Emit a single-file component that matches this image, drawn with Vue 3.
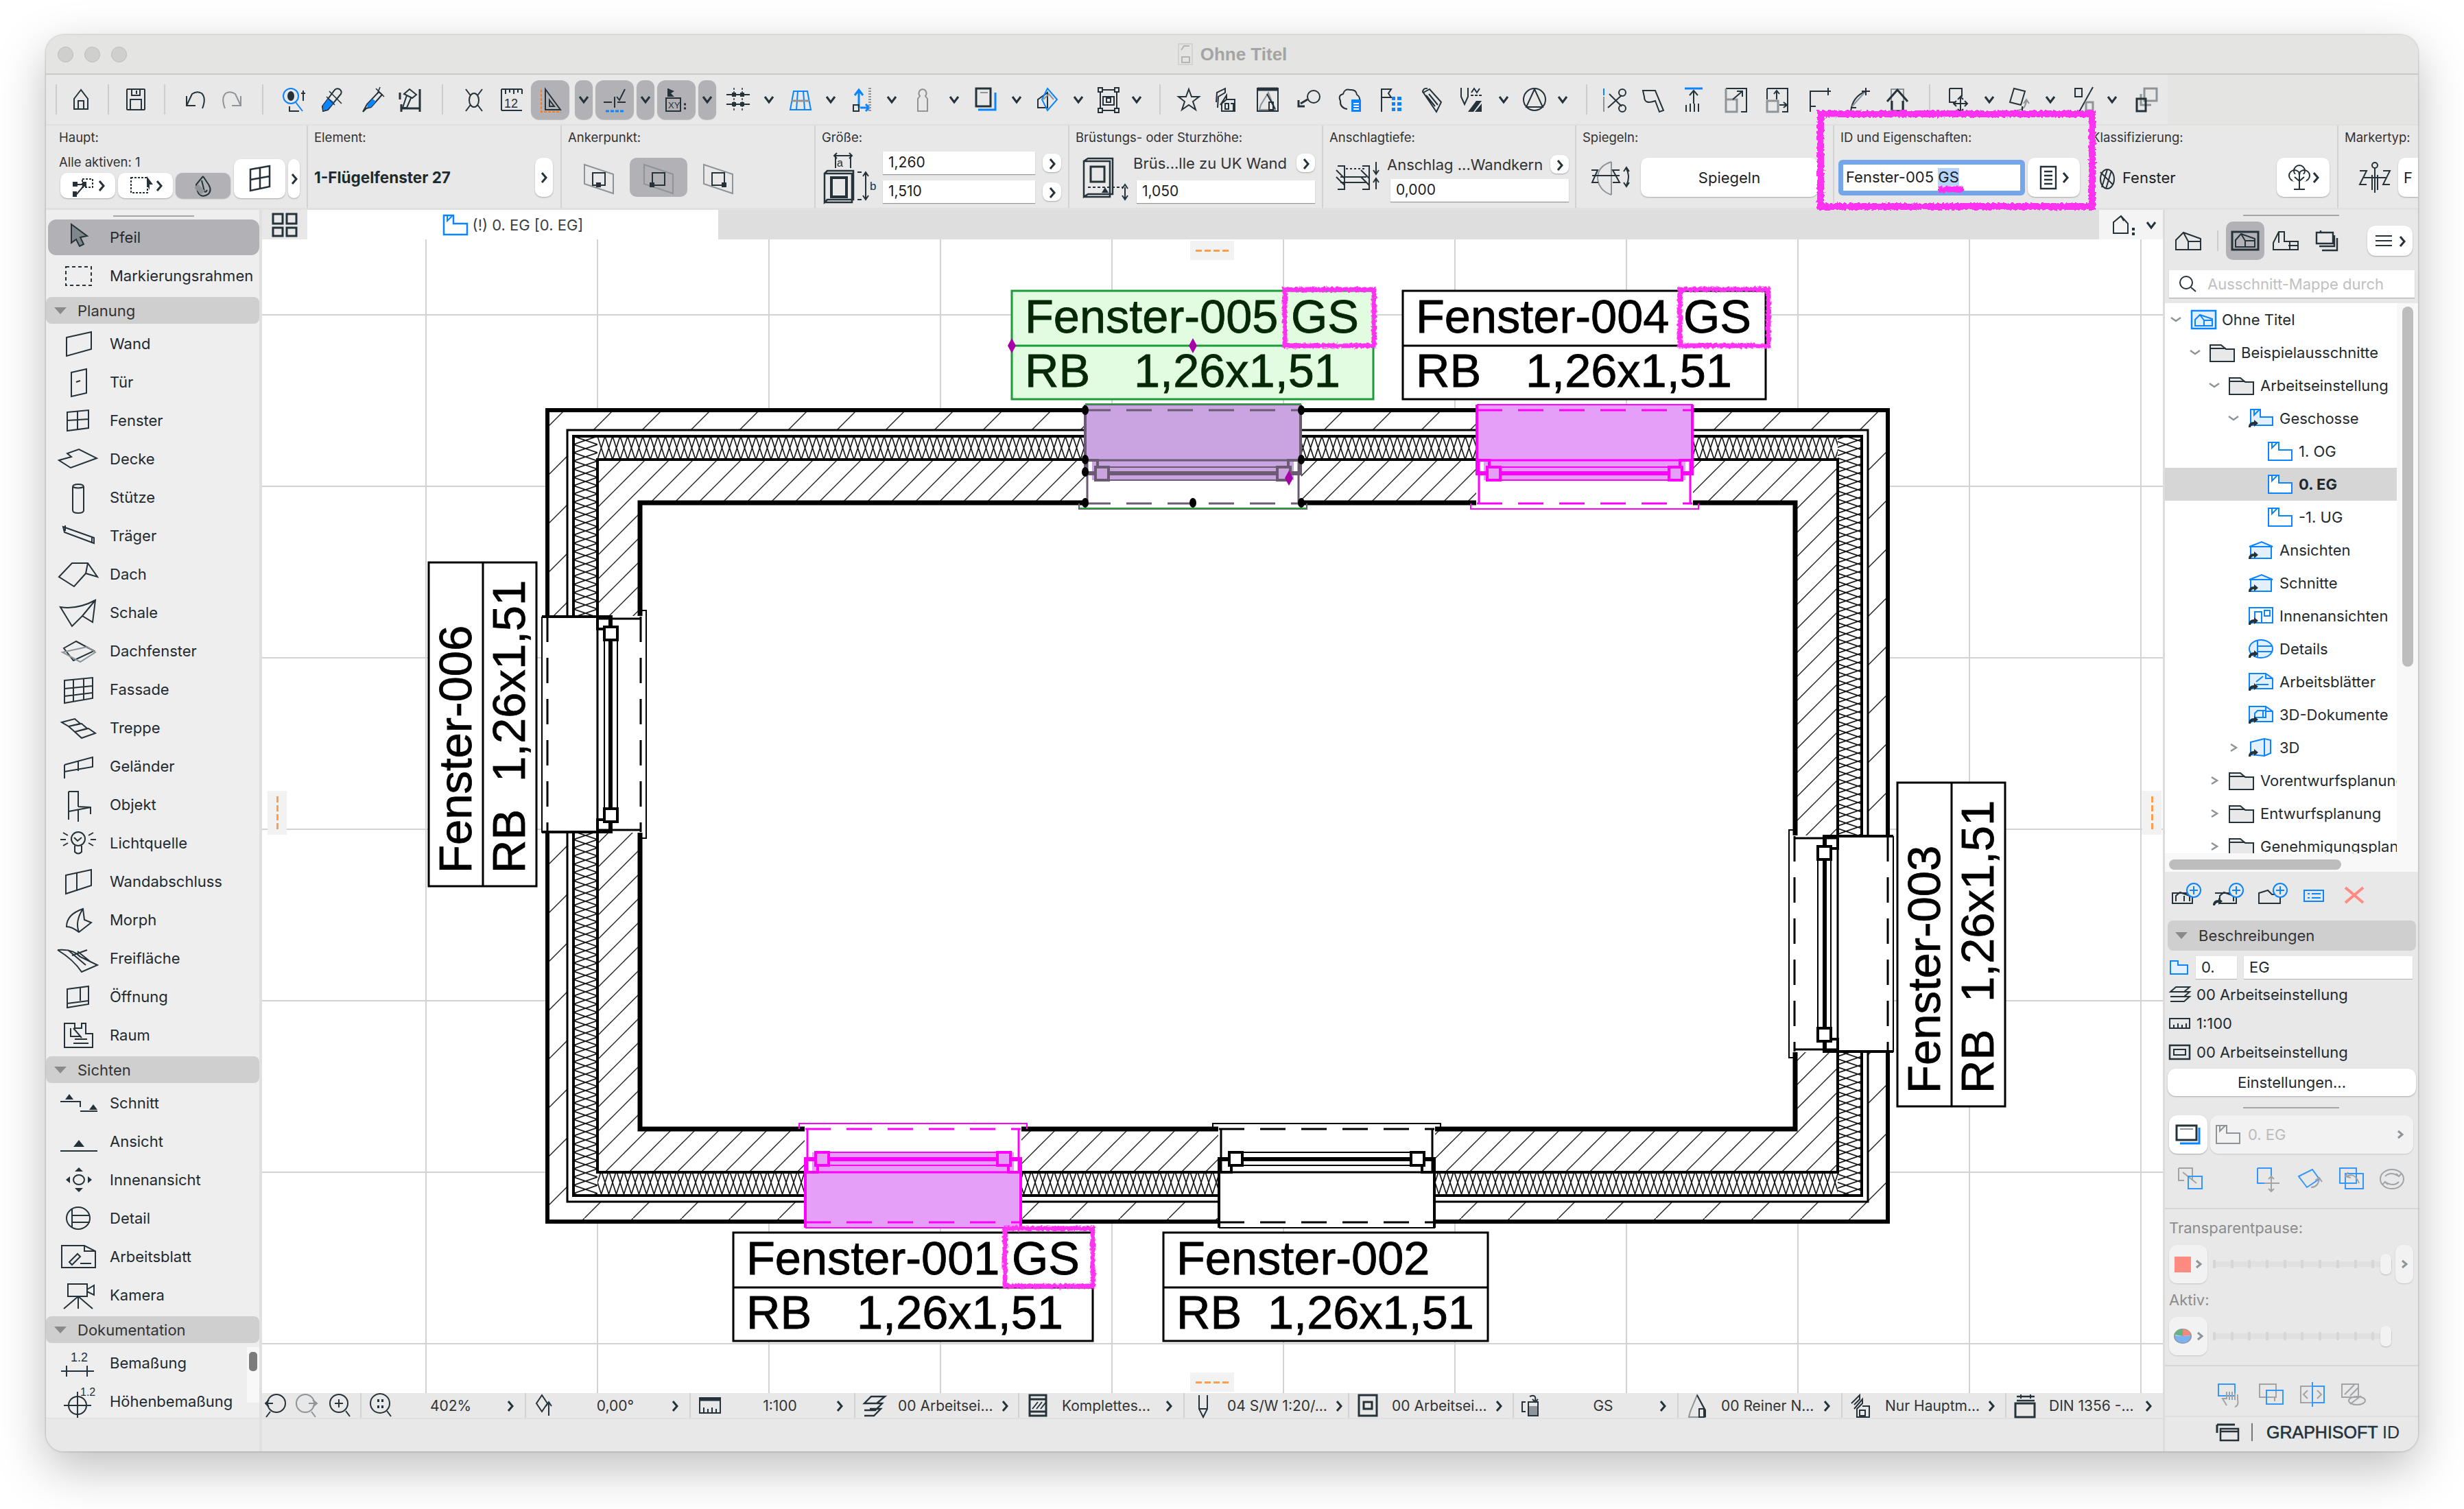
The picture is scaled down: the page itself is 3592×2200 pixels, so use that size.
<template>
  <div class="page">
    <div class="window">
      <!-- title bar -->
      <div class="titlebar">
        <div class="traffic"><i></i><i></i><i></i></div>
        <div class="title"><Ico n="titledoc" :w="24" :h="32" /><span>Ohne Titel</span></div>
        <div></div>
      </div>

      <!-- main toolbar -->
      <div class="toolbar">
        <div class="tb-strip">
          <div v-for="(it, i) in toolCells" :key="i" class="tb-cell" :style="{ width: it.width + 'px' }">
            <span v-if="it.n === 'sep'" class="tb-sep"></span>
            <span v-else-if="it.n === 'chev'" class="tb-chev" :class="{ on: it.on }"><Ico n="down" :w="16" :h="12" /></span>
            <span v-else class="tb-icon" :class="{ on: it.on }"><Ico :n="it.n" /></span>
          </div>
        </div>
      </div>

      <!-- info box -->
      <div class="infobar">
        <div class="sec" style="width: 380px">
          <div class="sec-label lab-main">Haupt:</div>
          <div class="haupt">
            <div class="haupt-col">
              <div class="alle">Alle aktiven: 1</div>
              <div class="haupt-btns">
                <span class="btn hb"><Ico n="marker1" :w="36" :h="32" /><Ico n="right" :w="10" :h="18" /></span>
                <span class="btn hb"><Ico n="marker2" :w="36" :h="32" /><Ico n="right" :w="10" :h="18" /></span>
                <span class="btn hb active"><Ico n="magnet" :w="32" :h="32" /></span>
              </div>
            </div>
            <span class="btn winbtn"><Ico n="window" :w="34" :h="40" /></span>
            <span class="btn tinybtn"><Ico n="right" :w="10" :h="18" /></span>
          </div>
        </div>

        <div class="sec" style="width: 370px">
          <div class="sec-label">Element:</div>
          <div class="sec-body">
            <span class="bold">1-Flügelfenster 27</span>
            <span class="grow"></span>
            <span class="btn chevbtn"><Ico n="right" :w="10" :h="18" /></span>
          </div>
        </div>

        <div class="sec" style="width: 370px">
          <div class="sec-label">Ankerpunkt:</div>
          <div class="sec-body anchors">
            <span class="anchor"><Ico n="anchorA" :w="46" :h="46" /></span>
            <span class="anchor active"><Ico n="anchorB" :w="46" :h="46" /></span>
            <span class="anchor"><Ico n="anchorC" :w="46" :h="46" /></span>
          </div>
        </div>

        <div class="sec" style="width: 370px">
          <div class="sec-label">Größe:</div>
          <div class="sec-body size">
            <Ico n="sizeab" :w="78" :h="76" />
            <div class="two">
              <div class="inrow"><span class="input w222">1,260</span><span class="btn smallbtn"><Ico n="right" :w="10" :h="16" /></span></div>
              <div class="inrow"><span class="input w222">1,510</span><span class="btn smallbtn"><Ico n="right" :w="10" :h="16" /></span></div>
            </div>
          </div>
        </div>

        <div class="sec" style="width: 370px">
          <div class="sec-label">Brüstungs- oder Sturzhöhe:</div>
          <div class="sec-body parapet">
            <Ico n="parapet" :w="70" :h="60" />
            <div class="two">
              <div class="txtrow"><span>Brüs...lle zu UK Wand</span><span class="btn smallbtn"><Ico n="right" :w="10" :h="16" /></span></div>
              <span class="input w260">1,050</span>
            </div>
          </div>
        </div>

        <div class="sec" style="width: 369px">
          <div class="sec-label">Anschlagtiefe:</div>
          <div class="sec-body parapet">
            <Ico n="rebate" :w="70" :h="46" />
            <div class="two tight">
              <div class="txtrow"><span>Anschlag ...Wandkern</span><span class="btn smallbtn"><Ico n="right" :w="10" :h="16" /></span></div>
              <span class="input w260">0,000</span>
            </div>
          </div>
        </div>

        <div class="sec" style="width: 376px">
          <div class="sec-label">Spiegeln:</div>
          <div class="sec-body mirror">
            <Ico n="mirror" :w="70" :h="54" />
            <span class="btn mirrorbtn">Spiegeln</span>
          </div>
        </div>

        <div class="sec" style="width: 373px">
          <div class="sec-label">ID und Eigenschaften:</div>
          <div class="sec-body idbody">
            <span class="idfield">Fenster-005 <mark>GS</mark></span>
            <span class="btn idbtn"><Ico n="doclist" :w="26" :h="34" /><Ico n="right" :w="10" :h="18" /></span>
          </div>
        </div>

        <div class="sec" style="width: 362px">
          <div class="sec-label lab-class">Klassifizierung:</div>
          <div class="sec-body classbody">
            <Ico n="ball" :w="24" :h="36" />
            <span>Fenster</span>
            <span class="grow"></span>
            <span class="btn treebtn"><Ico n="tree" :w="34" :h="38" /><Ico n="right" :w="10" :h="18" /></span>
          </div>
        </div>

        <div class="sec last" style="width: 118px">
          <div class="sec-label">Markertyp:</div>
          <div class="sec-body markbody">
            <Ico n="marker" :w="54" :h="48" />
            <span class="btn markbtn">F</span>
          </div>
        </div>
      </div>

      <div class="main">
        <!-- toolbox -->
        <aside class="lpanel">
          <div class="l-list">
            <div class="handle"></div>
            <div class="l-row pfeil"><span class="l-ico"><Ico n="arrow" :w="56" :h="36" /></span>Pfeil</div>
            <div class="l-row"><span class="l-ico"><Ico n="marquee" :w="56" :h="36" /></span>Markierungsrahmen</div>
            <template v-for="g in toolGroups" :key="g.title">
              <div class="l-head"><i class="tri"></i>{{ g.title }}</div>
              <div v-for="t in g.items" :key="t[0]" class="l-row"><span class="l-ico"><Ico :n="t[1]" :w="56" :h="36" /></span>{{ t[0] }}</div>
            </template>
            <div class="l-scroll"><i></i></div>
          </div>
          <div class="l-foot"></div>
        </aside>

        <!-- middle column -->
        <section class="center">
          <div class="tabbar">
            <span class="tab-grid"><Ico n="tabgrid" :w="40" :h="36" /></span>
            <div class="tab"><Ico n="floor" :w="38" :h="30" /><span>(!) 0. EG [0. EG]</span></div>
            <span class="grow"></span>
            <div class="tab-right"><Ico n="viewpt" :w="44" :h="32" /><Ico n="down" :w="16" :h="12" /></div>
          </div>

          <div class="canvas">
            <svg class="drawing" viewBox="382 348 2771 1682" width="2771" height="1682">
              <defs>
                <pattern id="hatchFine" width="35" height="35" patternUnits="userSpaceOnUse">
                  <path d="M36 -1 L-1 36 M-5 5 L5 -5 M30 40 L40 30" stroke="#222" stroke-width="1.4" />
                </pattern>
                <pattern id="hatchWide" width="71" height="71" patternUnits="userSpaceOnUse">
                  <path d="M72 -1 L-1 72" stroke="#222" stroke-width="1.4" />
                </pattern>
                <pattern id="insH" x="871" y="635" width="11" height="34" patternUnits="userSpaceOnUse">
                  <path d="M0 0 L11 34 M11 0 L0 34" stroke="#1a1a1a" stroke-width="1.7" />
                </pattern>
                <pattern id="insV" x="836" y="635" width="35" height="12" patternUnits="userSpaceOnUse">
                  <path d="M0 0 L35 12 M0 12 L35 0" stroke="#1a1a1a" stroke-width="1.7" />
                </pattern>
              </defs>

              <!-- grid -->
              <path v-for="x in gridX" :key="'x' + x" :d="`M${x} 348 V2030`" stroke="#d2d2d2" stroke-width="2" />
              <path v-for="y in gridY" :key="'y' + y" :d="`M382 ${y} H3153`" stroke="#d2d2d2" stroke-width="2" />

              <!-- wall -->
              <path :d="ring(0, 29)" fill="#fff" />
              <path :d="ring(0, 29)" fill="url(#hatchWide)" fill-rule="evenodd" />
              <path :d="ring(29, 38)" fill="#fff" fill-rule="evenodd" />
              <path :d="ring(38, 73)" fill="#fff" fill-rule="evenodd" />
              <rect x="871" y="635" width="1808" height="34" fill="url(#insH)" />
              <rect x="871" y="1708" width="1808" height="34" fill="url(#insH)" />
              <rect x="836" y="635" width="35" height="1107" fill="url(#insV)" />
              <rect x="2679" y="635" width="35" height="1107" fill="url(#insV)" />
              <path :d="ring(73, 135)" fill="#fff" fill-rule="evenodd" />
              <path :d="ring(73, 135)" fill="url(#hatchFine)" fill-rule="evenodd" />
              <rect x="798" y="597" width="1954" height="1183" fill="none" stroke="#000" stroke-width="6" />
              <rect x="827" y="626" width="1896" height="1125" fill="none" stroke="#000" stroke-width="3" />
              <rect x="836" y="635" width="1878" height="1107" fill="none" stroke="#000" stroke-width="4" />
              <rect x="871" y="669" width="1808" height="1039" fill="none" stroke="#000" stroke-width="4" />
              <rect x="933" y="732" width="1684" height="913" fill="#fff" stroke="#000" stroke-width="7" />

              <!-- windows -->
              <g v-for="w in windows" :key="w.id" :transform="w.t" :stroke="w.stroke" fill="none">
                <rect x="-1" y="-9" width="316" height="154" fill="#fff" stroke="none" />
                <rect x="0" y="-8" width="314" height="81" :fill="w.fill" stroke="none" />
                <rect x="10" y="73" width="294" height="29" :fill="w.fill" stroke="none" />
                <path d="M0 -8 H314 V0 M0 -8 V0" stroke-width="2" />
                <path d="M0 -8 V73 M314 -8 V73" stroke-width="4" />
                <path d="M0 73 H314" stroke-width="3" />
                <path d="M0 0 H314 M0 136 H314" stroke-width="3" stroke-dasharray="37 23" />
                <path d="M3 73 V136 M311 73 V136" stroke-width="3" />
                <path d="M0 73 H18 V93 H0 Z M296 73 H314 V93 H296 Z" stroke-width="4" />
                <path d="M34 83 H280 V102 H34 Z" stroke-width="2" />
                <path d="M34 92 H280 M2 92 H15 M299 92 H312" stroke-width="6" />
                <rect x="15" y="83" width="19" height="19" stroke-width="4" :fill="w.fill === 'none' ? '#fff' : w.fill" />
                <rect x="280" y="83" width="19" height="19" stroke-width="4" :fill="w.fill === 'none' ? '#fff' : w.fill" />
                <path d="M-9 136 V144 H323 V136" stroke-width="2" />
              </g>

              <!-- selected window outline -->
              <path d="M1582 588 H1897 M1574 740 H1905" stroke="#2f9e44" stroke-width="2" fill="none" />
              <ellipse v-for="(d, i) in handles" :key="'h' + i" :cx="d[0]" :cy="d[1]" rx="5" ry="7" fill="#000" />

              <!-- markers: horizontal labels -->
              <g v-for="l in labels" :key="l.id" class="lbl">
                <rect :x="l.x" :y="l.y" :width="l.w" height="158" :fill="l.sel ? '#e1fce1' : '#fff'" :stroke="l.sel ? '#1f9a3a' : '#000'" stroke-width="3" />
                <path :d="`M${l.x} ${l.y + 80} h${l.w}`" :stroke="l.sel ? '#1f9a3a' : '#000'" stroke-width="3" />
                <g :fill="l.sel ? '#062806' : '#000'" :stroke="l.sel ? '#062806' : '#000'" stroke-width=".8">
                  <text :x="l.x + 19" :y="l.y + 61">{{ l.id }}</text>
                  <text v-if="l.gs" :x="l.gs" :y="l.y + 61">GS</text>
                  <text :x="l.x + 19" :y="l.y + 140">RB</text>
                  <text :x="l.nx" :y="l.y + 140">1,26x1,51</text>
                </g>
              </g>

              <!-- markers: rotated labels -->
              <g v-for="l in sideLabels" :key="l.id" class="lbl side">
                <rect :x="l.x" :y="l.y" width="157" height="472" fill="#fff" stroke="#000" stroke-width="3" />
                <path :d="`M${l.x + 79} ${l.y} v472`" stroke="#000" stroke-width="3" />
                <text :transform="`translate(${l.x + 62} ${l.y + 453}) rotate(-90)`">{{ l.id }}</text>
                <text :transform="`translate(${l.x + 140} ${l.y + 453}) rotate(-90)`">RB</text>
                <text :transform="`translate(${l.x + 140} ${l.y + 320}) rotate(-90)`">1,26x1,51</text>
              </g>

              <path v-for="(d, i) in diamonds" :key="'d' + i" :d="`M${d[0]} ${d[1] - 11} l6 11 l-6 11 l-6 -11 Z`" fill="#a800a8" />
            </svg>

            <i class="edge e-top"></i>
            <i class="edge e-bottom"></i>
            <i class="edge e-left"></i>
            <i class="edge e-right"></i>
          </div>

          <div class="statusbar">
            <div class="st-zoom">
              <Ico n="zoomback" :w="36" :h="34" />
              <Ico n="zoomfwd" :w="36" :h="34" />
              <Ico n="zoomin" :w="36" :h="34" />
            </div>
            <div v-for="s in statusItems" :key="s.key" class="st-sec" :style="{ width: s.w + 'px' }">
              <span class="st-ico"><Ico :n="s.ico" :w="36" :h="34" /></span>
              <span class="st-txt" :class="{ mid: s.mid }">{{ s.t }}</span>
              <span class="st-chev"><Ico n="right" :w="10" :h="16" /></span>
            </div>
          </div>
          <div class="c-foot"></div>
        </section>

        <!-- navigator -->
        <aside class="rpanel">
          <div class="handle wide"></div>
          <div class="r-tabs">
            <Ico n="house3d" :w="40" :h="30" />
            <i class="vline"></i>
            <span class="r-on"><Ico n="projmap" :w="40" :h="30" /></span>
            <Ico n="viewmap" :w="40" :h="30" />
            <Ico class="pub" n="publish" :w="36" :h="32" />
            <span class="btn r-menu"><Ico n="menu" :w="28" :h="20" /><Ico n="right" :w="10" :h="16" /></span>
          </div>
          <div class="r-search"><Ico n="search" :w="26" :h="26" /><span>Ausschnitt-Mappe durch</span></div>
          <div class="r-tree-wrap">
            <div class="r-tree">
              <div
                v-for="r in treeRows"
                :key="r.t"
                class="t-row"
                :class="{ sel: r.sel }"
                :style="{ paddingLeft: 8 + r.l * 28 + 'px' }"
              >
                <span class="t-chev"><Ico v-if="r.c" :n="r.c === 'd' ? 'tdown' : 'tright'" :w="16" :h="14" /></span>
                <Ico :n="r.i" :w="38" :h="28" />
                <span class="t-text">{{ r.t }}</span>
              </div>
            </div>
            <div class="r-vbar"><i></i></div>
          </div>
          <div class="r-hbar"><i></i></div>
          <div class="r-actions">
            <Ico n="addview" :w="44" :h="40" />
            <Ico n="addlink" :w="44" :h="40" />
            <Ico n="addfolder" :w="44" :h="40" />
            <Ico n="listblue" :w="32" :h="40" />
            <Ico n="redx" :w="32" :h="40" />
          </div>
          <div class="l-head r-head"><i class="tri"></i>Beschreibungen</div>
          <div class="r-fields">
            <Ico n="floorsmall" :w="28" :h="24" />
            <span class="r-in a">0.</span>
            <span class="r-in b">EG</span>
          </div>
          <div class="r-line first"><Ico n="stack" :w="32" :h="26" />00 Arbeitseinstellung</div>
          <div class="r-line"><Ico n="scale" :w="32" :h="26" />1:100</div>
          <div class="r-line"><Ico n="penset" :w="32" :h="26" />00 Arbeitseinstellung</div>
          <div class="btn r-settings">Einstellungen...</div>
          <div class="handle wide second"></div>
          <div class="r-trace">
            <span class="btn r-square"><Ico n="traceon" :w="38" :h="32" /></span>
            <span class="r-disabled"><Ico n="floorgray" :w="38" :h="28" /><span>0. EG</span><span class="grow"></span><Ico n="rightgray" :w="10" :h="16" /></span>
          </div>
          <div class="r-dim">
            <Ico n="t1" :w="38" :h="34" />
            <span class="grow"></span>
            <Ico n="t2" :w="38" :h="34" />
            <Ico n="t3" :w="38" :h="34" />
            <Ico n="t4" :w="38" :h="34" />
            <Ico n="t5" :w="38" :h="34" />
          </div>
          <div class="r-sep"></div>
          <div class="r-cap">Transparentpause:</div>
          <div class="r-slider">
            <span class="r-square dim"><i class="swatch"></i><Ico n="rightgray" :w="10" :h="16" /></span>
            <span class="track"><i v-for="n in 11" :key="n"></i><b></b></span>
            <span class="r-mini dim"><Ico n="rightgray" :w="10" :h="16" /></span>
          </div>
          <div class="r-cap cap2">Aktiv:</div>
          <div class="r-slider">
            <span class="r-square dim"><Ico n="pie" :w="28" :h="24" /><Ico n="rightgray" :w="10" :h="16" /></span>
            <span class="track"><i v-for="n in 11" :key="n"></i><b></b></span>
          </div>
          <div class="r-sep s2"></div>
          <div class="r-dim center-row">
            <Ico n="t6" :w="38" :h="34" />
            <Ico n="t7" :w="38" :h="34" />
            <Ico n="t8" :w="38" :h="34" />
            <Ico n="t9" :w="38" :h="34" />
          </div>
          <div class="r-foot">
            <Ico n="winset" :w="34" :h="26" />
            <i class="vbar"></i>
            <span class="gs-id"><b>GRAPHISOFT</b> ID</span>
          </div>
        </aside>
      </div>
    </div>

    <!-- hand-drawn marks laid over the screenshot -->
    <svg class="marks" viewBox="0 0 3592 2200" width="3592" height="2200">
      <defs>
        <filter id="scribble" x="-5%" y="-5%" width="110%" height="110%">
          <feTurbulence type="fractalNoise" baseFrequency="0.25" numOctaves="2" seed="4" result="noise" />
          <feDisplacementMap in="SourceGraphic" in2="noise" scale="6" />
        </filter>
      </defs>
      <g fill="none" stroke="#ff30f2" filter="url(#scribble)">
        <rect x="2654" y="166" width="396" height="135" stroke-width="10" />
        <rect x="1873" y="422" width="130" height="82" stroke-width="7" />
        <rect x="2449" y="422" width="129" height="82" stroke-width="7" />
        <rect x="1465" y="1791" width="128" height="84" stroke-width="7" />
        <path d="M2826 276 H2862" stroke-width="9" />
      </g>
    </svg>
  </div>
</template>

<script setup>
import { h } from 'vue'

const B = '#0a84ff'
const G = '#8f9498'
const O = '#ff7a1a'
const blue = `stroke="${B}"`
const gray = `stroke="${G}"`
const P = (d, a = '') => `<path d="${d}" ${a}/>`
const solid = (c) => `fill="${c}" stroke="none"`
const T = (x, y, s, t) => `<text x="${x}" y="${y}" font-size="${s}" font-family="Liberation Sans, sans-serif" fill="#25323a" stroke="none">${t}</text>`
const link = P('M1 27 q0 -8 8 -8 v-3 l6 5 -6 5 v-3 q-4 0 -5 4 Z', solid('#25323a'))
const lightB = '#e2f0ff'

const icons = {
  titledoc: P('M2 1 H22 V31 H2 Z', 'stroke="#d2d2d2"') + P('M6 10 L10 4 H18 M7 20 H18 V28 H7 Z', 'stroke="#b4b4b4"'),
  // toolbar
  home: P('M18 4 L8 17 V32 H28 V17 Z M14 32 V20 H22 V32'),
  save: P('M6 3 H30 Q31 3 31 4 V32 Q31 33 30 33 H6 Q5 33 5 32 V4 Q5 3 6 3 Z M12 3 V12 H24 V3 M19 5 V10 M10 33 V18 H26 V33'),
  undo: P('M4 13 V27 H17 M4 27 L12 10 Q19 5 26 9 Q33 16 27 31'),
  redo: P('M32 13 V27 H19 M32 27 L24 10 Q17 5 10 9 Q3 16 9 31', gray),
  find: `<circle cx="13" cy="13" r="11" ${blue}/><ellipse cx="13" cy="13" rx="5" ry="7" ${solid('#25323a')}/>` + P('M20 22 L30 35', blue) + P('M31 5 V20 M28 9 H34 M11 28 V35 H25') ,
  pipette: P('M5 35 L4 28 L22 4 Q25 1 29 3 Q33 6 31 10 L12 33 Z') + P('M5 34 L5 27 L13 16 L21 22 L12 32 Z', solid(B)) + P('M14 6 L32 24 M10 14 L22 26', 'stroke-width="1.6"'),
  inject: P('M3 36 L9 25 L26 7 L31 11 L15 29 L8 31 Z') + P('M9 30 L10 25 L17 17 L22 21 L15 29 Z', solid(B)) + P('M22 2 L34 14 M28 0 L24 10', 'stroke-width="1.6"'),
  hammer: P('M8 10 L16 3 L26 11 L20 16 Z M12 12 L6 30 L12 30 L18 16') + P('M31 3 V30 M4 31 H31 M4 25 V36 M31 25 V36 M2 8 V18', 'stroke-width="3"'),
  xmark: P('M6 3 L30 35 M30 3 L6 35') + `<ellipse cx="18" cy="19" rx="7" ry="10" fill="#e8e8e8"/>`,
  ruler: P('M3 3 H33 M3 34 H33 M3 3 V34 M9 3 V10 M15 3 V8 M21 3 V10 M27 3 V8 M33 3 V10') + T(7, 30, 18, '12'),
  tri: P('M11 3 L33 33 H11 Z M17 19 L24 28 H17 Z') + P('M5 4 V36 H34', `stroke="${O}" stroke-dasharray="4 2"`),
  snap: P('M2 22 H14 M22 22 H34 M18 14 V30') + P('M21 14 L25 19 L33 3') + P('M5 35 H33', `${blue} stroke-width="3" stroke-dasharray="5 2"`),
  xy: P('M6 2 V14') + P('M6 2 L15 6 L10 9 L15 14 H6 Z', solid('#25323a')) + P('M3 16 H24 V35 H3 Z') + T(6, 31, 13, 'XY') + P('M29 25 h3 M29 31 h3', 'stroke-width="3"'),
  gridsnap: P('M12 1 V35 M24 1 V35', 'stroke-dasharray="3 2" stroke-width="1.5"') + P('M1 11 H35 M1 25 H35', 'stroke-width="2"') + P('M9 8h6v6h-6z M21 8h6v6h-6z M9 22h6v6h-6z M21 22h6v6h-6z', solid('#25323a')),
  plane: P('M8 6 H28 L33 33 H3 Z M14 6 L12 33 M22 6 L24 33', blue) + P('M5 20 H31', 'stroke="#8f9498" stroke-width="3"'),
  gravity: P('M14 30 V6 M8 12 L14 4 L20 12 M16 30 H28 M24 25 L29 30 L24 35', `${blue} stroke-width="3"`) + P('M30 1 V36', 'stroke="#8f9498" stroke-width="4" stroke-dasharray="2 2"') + P('M6 26 H14 V35 H6 Z'),
  weight: P('M18 3 A6 6 0 0 1 22 13 L25 17 V35 H11 V17 L14 13 A6 6 0 0 1 18 3 Z', gray),
  layers: P('M5 2 H26 V28 H5 Z', 'stroke-width="3"') + P('M11 8 H22', gray) + P('M8 33 H33 V8', `${blue} stroke-width="3"`),
  diamond: P('M4 18 L18 8 V30 H4 Z') + P('M18 2 L32 18 L18 34 L10 18 Z', blue) + P('M12 18 L20 10 L27 18', gray),
  frame: P('M5 4 H29 M5 34 H29 M5 4 V34 M29 4 V34', 'stroke-width="2"') + P('M9 14 H25 V26 H9 Z') + P('M2 1h6v6h-6z M26 1h6v6h-6z M2 31h6v6h-6z M26 31h6v6h-6z M14 16h6v6h-6z', 'fill="#e8e8e8"'),
  star: P('M18 3 L22 14 H33 L24 21 L28 33 L18 26 L8 33 L12 21 L3 14 H14 Z'),
  house: P('M3 22 L4 8 L16 2 V8 L6 14 L5 30 M9 26 L18 12 V18 L11 24 V35 H30 V18 H18') + P('M16 24 H21 V32 H16 Z M24 24 H28 V35'),
  drawing: P('M3 2 H33 V35 H3 Z') + P('M3 3 H33', 'stroke-width="5"') + P('M19 8 L29 33 H6 L8 26 Z', gray) + P('M17 10 L29 32 M20 22 H26 V33 H20 Z'),
  keyback: `<circle cx="25" cy="14" r="9"/>` + P('M16 18 L6 24 M3 19 V28 H12', 'stroke-width="3"'),
  clouddoc: P('M14 32 Q3 30 4 20 Q0 12 8 10 Q10 2 18 4 Q27 3 28 11 Q33 14 32 20') + P('M20 18 H34 V36 H20 Z', `fill="${B}" stroke="none"`) + P('M23 24 H31 M23 28 H31 M23 32 H31', 'stroke="#fff"'),
  flaglist: P('M4 36 V3 H18 L14 9 L18 15 H4') + P('M19 14h5v5h-5z M27 14h6v5h-6z M19 22h5v5h-5z M27 22h6v5h-6z M19 30h5v5h-5z M27 30h6v5h-6z', solid(B)),
  tag: P('M5 8 L14 3 L31 22 L24 36 Z M9 12 L22 28 M13 10 L26 26') + P('M4 8 Q4 1 11 2'),
  penhatch: P('M4 1 V14 L9 25 L14 14 V1') + P('M19 8 L23 2 L27 8 L31 2', 'stroke-width="2"') + P('M18 12 H34', 'stroke-dasharray="4 2"') + P('M14 36 L26 20 H34 L22 36 Z M24 36 L34 24 V36 Z', solid('#25323a')),
  tricircle: `<circle cx="18" cy="18" r="16"/>` + P('M18 3 L30 29 H6 Z'),
  scissors: P('M2 2 V12', `${blue}`) + P('M2 14 V36', gray) + P('M8 30 L28 12 M10 10 L28 28') + `<circle cx="29" cy="8" r="5"/><circle cx="29" cy="31" r="5"/>`,
  trim: P('M4 5 H22 L34 34 L28 36 L22 20 Q6 26 6 14 Z'),
  blueup: P('M4 2 H30', `${blue} stroke-width="3"`) + P('M17 6 V24 M11 12 L17 5 L23 12 M6 26 V36 M12 24 V36 M18 24 V36 M24 24 V36'),
  docarrow: P('M4 2 H34 V36 H26') + P('M4 18 H20 V36 H4 Z M4 18 V2', 'stroke="#8f9498" stroke-width="3"') + P('M14 18 L28 6 M20 6 H28 V14'),
  docarrow2: P('M4 2 H34 V36 H26 M4 18 V2') + P('M4 20 H20 V36 H4 Z', 'stroke="#8f9498" stroke-width="3"') + P('M18 6 V18 M14 10 L18 5 L22 10 M22 26 H32 M28 22 L33 26 L28 30'),
  corner: P('M6 36 V6 H32 M6 28 H14 M32 1 V12 M26 6 H36', 'stroke-width="2"'),
  arc: P('M6 36 Q8 14 28 6 M6 30 H14 M28 1 V12 M22 6 H34') + P('M8 28 L26 8', gray),
  housearrow: P('M18 3 H27 V36 H9 V3 Z', 'stroke="#8f9498"') + P('M3 21 L18 4 L33 21 M10 20 V35 H26 V20', 'stroke-width="3"'),
  move: P('M4 2 H22 V14 M4 2 V22 H12') + P('M16 18 L20 14 V32 M20 14 L24 18 M10 24 H30 M14 20 L10 24 L14 28 M26 20 L30 24 L26 28 M20 24 V36 M16 32 L20 36 L24 32'),
  rotate: P('M10 2 L26 6 L20 26 L4 22 Z') + P('M14 34 Q26 34 28 20 M24 24 L28 18 L32 24', gray) + P('M22 36 V28'),
  percent: P('M8 2 H18 V14 H8 Z') + P('M34 0 L14 36') + P('M24 22 H34 V34 H24 Z', 'stroke="#8f9498" stroke-width="3"'),
  copy: P('M14 2 H32 V20 H14 Z', 'stroke="#8f9498" stroke-width="3"') + P('M9 10 V26 H24', 'stroke="#8f9498" stroke-width="3"') + P('M3 17 H16 V35 H3 Z', 'stroke-width="3"'),
  down: P('M2 2 L8 10 L14 2', 'stroke-width="3"'),
  right: P('M2 2 L8 9 L2 16', 'stroke-width="3"'),
  rightgray: P('M2 3 L8 8 L2 13', `stroke="#8f9498" stroke-width="3"`),
  // info box
  marker1: P('M16 6 H31 V18 H16 Z', 'stroke-dasharray="3 2"') + P('M4 14 H18 M6 30 L20 14') + P('M2 10h7v7h-7z M2 24h6v8h-6z M16 10h6v7h-6z', solid('#25323a')),
  marker2: P('M3 4 H27 V26 H3 Z', 'stroke-dasharray="3 2"') + P('M26 2 L35 14 L30 14 L30 22 L26 14 Z', solid('#25323a')),
  magnet: P('M16 2 L24 14 Q30 24 22 29 Q12 34 8 24 L6 14 L16 2 M14 8 L18 24 Q20 26 22 22') + P('M6 16 L16 26', 'stroke="#8f9498" stroke-width="8"'),
  window: P('M3 6 L31 1 V31 L3 37 Z M3 21 L31 16 M17 3 V34', 'stroke-width="2.5"'),
  anchorA: P('M2 4 L44 18 V46 L2 32 Z', gray) + P('M14 16 H32 V34 H14 Z') + `<rect x="19" y="30" width="7" height="7" fill="#25323a" stroke="none"/>`,
  anchorB: P('M2 4 L44 18 V46 L2 32 Z', gray) + P('M14 16 H32 V34 H14 Z') + `<rect x="10" y="30" width="7" height="7" fill="#25323a" stroke="none"/>`,
  anchorC: P('M2 4 L44 18 V46 L2 32 Z', gray) + P('M14 16 H32 V34 H14 Z') + `<rect x="28" y="30" width="7" height="7" fill="#25323a" stroke="none"/>`,
  sizeab: T(20, 22, 16, 'a') + P('M18 6 H40 M20 2 L16 6 L20 10 M38 2 L42 6 L38 10 M18 4 V24 M40 4 V24', 'stroke-dasharray="0"') + P('M2 32 L6 28 H44 V70 H6 L2 74 Z M2 32 H42 V74 H2 Z', 'stroke-width="2.5"') + P('M12 38 H34 V66 H12 Z', 'stroke-width="4"') + P('M62 30 V70 M58 36 L62 30 L66 36 M58 64 L62 70 L66 64 M50 30 H56 M50 70 H56') + T(68, 56, 17, 'b'),
  parapet: P('M4 6 L10 2 H46 V54 H10 L4 58 Z M4 6 H42 V58 H4 Z', 'stroke-width="2.5"') + P('M14 14 H34 V36 H14 Z', 'stroke-width="3"') + P('M10 44 H62', 'stroke-dasharray="4 3"') + P('M30 52 L35 44 L40 52 Z', solid('#25323a')) + P('M64 44 V60 M60 46 L64 40 L68 46 M60 56 L64 62 L68 56'),
  rebate: P('M4 6 H14 V40 H4 M2 12 L14 24 M2 22 L14 34 M40 6 H50 V40 H40 M38 12 L50 24 M38 22 L50 34') + P('M8 22 H46 M8 30 H46', 'stroke-width="2"') + P('M16 10 H44', 'stroke-dasharray="3 3"') + P('M60 0 V16 M56 12 L60 18 L64 12 M60 40 V26 M56 30 L60 24 L64 30'),
  mirror: P('M32 4 Q12 10 12 28 Q14 46 32 52', gray) + P('M32 4 V52', gray) + P('M3 16 H12 L4 34 H13 M4 24 H44 M44 16 H34 L44 34 H34', 'stroke-dasharray="0"') + P('M54 14 Q60 26 54 38 M50 18 L54 12 L58 18 M50 34 L54 40 L58 34'),
  doclist: P('M2 1 H24 V33 H2 Z M7 8 H19 M7 14 H19 M7 20 H19 M7 26 H19', 'stroke-width="2.4"'),
  ball: `<ellipse cx="12" cy="20" rx="10" ry="14"/>` + P('M2 10 L20 28 M12 6 L4 32 M18 8 L10 34'),
  tree: `<circle cx="10" cy="16" r="8"/><circle cx="24" cy="16" r="8"/><circle cx="17" cy="9" r="8"/>` + `<path d="M7 24 Q17 28 27 24 L24 14 H10 Z" fill="#fff" stroke="none"/>` + P('M17 12 V36 M10 18 L17 24 L24 18 M9 36 H25'),
  marker: `<circle cx="26" cy="6" r="4"/>` + P('M4 14 H14 L4 34 H14 M38 14 H48 L38 34 H48 M26 10 V46 M22 20 V42 M30 20 V42 M10 24 H42', 'stroke-dasharray="0"'),
  // tool palette
  arrow: `<path d="M17 -1 L40 16 L30 18 L35 28 L29 31 L24 21 L17 26 Z" fill="#80878b" stroke="#25323a"/>`,
  marquee: P('M9 5 H46 V32 H9 Z', 'stroke-dasharray="5 4"'),
  wall: P('M10 9 L46 1 V26 L10 36 Z'),
  door: P('M17 4 L39 -1 V34 L17 39 Z M24 18 L30 16'),
  fenster: P('M11 6 L42 3 V29 L11 33 Z M11 18 L42 16 M26 5 V31'),
  slab: P('M-1 20 L17 15 L11 10 L28 4 L54 17 L16 31 Z'),
  column: P('M19 3 V37 Q19 41 27 41 Q35 41 35 37 V3 Q35 -1 27 -1 Q19 -1 19 3 Q27 6 35 3'),
  beam: P('M5 5 L50 21 V29 L7 13 Z M8 3 V11 M47 20 V29'),
  roof: P('M-1 22 L18 2 H41 L55 22 L38 17 L21 36 Z M38 17 L41 2'),
  shell: P('M1 10 Q26 14 52 0 L48 32 L33 23 L18 38 Z M33 23 L52 0'),
  skylight: P('M6 14 L24 4 L50 18 L20 32 Z') + P('M4 20 L40 12 L52 20 L30 34 Z', gray),
  facade: P('M7 5 L48 1 V31 L7 38 Z M7 17 L48 13 M7 28 L48 23 M20 4 V36 M35 3 V33'),
  stair: P('M3 10 L22 5 L30 12 L13 16 Z M13 16 L32 12 L40 19 L22 24 Z M22 24 L42 19 L52 26 L32 33 Z'),
  railing: P('M7 16 L48 5 V19 L7 26 M7 16 V36 M27 10 V25 M48 5 V19'),
  object: P('M13 -1 H27 V21 M13 -1 V28 L45 22 M27 21 L45 22 V32 M13 28 V40 M27 25 V43'),
  lamp: `<circle cx="27" cy="12" r="10"/>` + P('M22 22 V31 Q27 36 32 31 V22 M21 10 L26 15 L32 10 M5 3 L12 7 M1 13 H9 M5 22 L12 18 M49 3 L42 7 M53 13 H45 M49 22 L42 18'),
  wallend: P('M9 9 L46 1 V24 L9 36 Z') + P('M25 5 V32'),
  morph: P('M10 28 Q10 10 34 2 L36 18 L46 22 L28 36 Q18 28 10 28 Z M28 36 Q22 20 34 2'),
  surface: P('M-3 6 Q20 4 30 16 L55 28 L32 38 Q20 20 -3 6 M12 6 L38 28 M26 8 L46 24 M18 14 L40 6'),
  opening: P('M11 7 L42 3 V29 L11 34 Z M30 5 V24 M11 28 L42 24'),
  zone: P('M7 1 H22 V8 H32 V1 H38 V16 H48 V36 H7 Z M20 8 L32 22 M22 24 H40 M20 30 H42 M16 8 V20 H30'),
  section: P('M1 16 H30 V24') + P('M8 13 L14 5 L20 13 Z M43 28 L49 20 L55 28 Z', solid('#25323a')) + P('M30 30 H55'),
  elevation: P('M1 32 H55') + P('M20 26 L28 16 L36 26 Z', solid('#25323a')),
  interior: `<ellipse cx="28" cy="18" rx="8" ry="7"/>` + P('M22 6 L28 0 L34 6 Z M22 30 L28 36 L34 30 Z M9 18 L15 13 V23 Z M47 18 L41 13 V23 Z', solid('#25323a')),
  detail: `<ellipse cx="27" cy="18" rx="17" ry="16"/>` + P('M18 4 V32 M18 14 H44 M18 24 H44'),
  worksheet: P('M3 2 H36 L52 10 V34 H3 Z M36 2 V10 H52 M14 26 L26 14 L30 18 L18 30 Z M30 28 H46'),
  camera: P('M12 2 H40 V20 H12 Z M40 10 L50 4 V18 L40 13 M27 20 V38 M27 20 L6 38 M27 20 L48 38'),
  dim: T(16, 16, 18, '1.2') + P('M2 30 H50 M10 22 V38 M40 22 V38'),
  leveldim: `<circle cx="26" cy="24" r="13"/>` + P('M26 4 V42 M6 24 H46') + T(30, 10, 16, '1.2'),
  // tabs + status
  tabgrid: P('M3 2 H17 V16 H3 Z M23 2 H37 V16 H23 Z M3 22 H17 V34 H3 Z M23 22 H37 V34 H23 Z', 'stroke-width="3"'),
  floor: `<path d="M2 1 H16 V13 H36 V29 H2 Z" fill="#fff" ${blue} stroke-width="2.5"/>` + P('M7 2 V9 L14 2', `${blue}`),
  floorgray: `<path d="M2 1 H17 V12 H36 V27 H2 Z" ${gray}/>` + P('M7 1 V9 L15 1', gray),
  floorsmall: `<path d="M1 2 H12 V8 H26 V21 H1 Z" fill="#e2f0ff" ${blue}/>`,
  viewpt: P('M3 28 V12 L14 3 L24 14 V28 Z M14 3 L18 10') + P('M30 20h4v4h-4z M30 27h4v4h-4z', solid('#25323a')),
  zoomback: `<circle cx="19" cy="14" r="13"/>` + P('M10 26 L4 34 M3 14 H14 M8 9 L3 14 L8 19'),
  zoomfwd: `<circle cx="15" cy="14" r="13" ${gray}/>` + P('M24 26 L30 34 M20 14 H32 M26 9 L32 14 L26 19', gray),
  zoomin: `<circle cx="18" cy="14" r="13"/>` + P('M28 25 L34 33 M18 8 V20 M12 14 H24'),
  zoomfit: `<circle cx="18" cy="14" r="14"/>` + P('M28 25 L34 33') + P('M14 8h3v4h-3z M20 8h3v4h-3z M14 17h3v4h-3z M20 17h3v4h-3z', solid('#25323a')),
  angle: P('M14 2 L22 14 L14 26 L6 14 Z M24 12 V32 M20 18 L24 12 L28 18'),
  scale2: P('M4 6 H34 V28 H4 Z') + P('M4 8 H34', 'stroke-width="5"') + P('M10 28 V20 M16 28 V22 M22 28 V20 M28 28 V22'),
  stack2: P('M14 4 H34 L22 14 H4 Z M14 14 H30 L20 24 H4 M12 22 H28 L18 32 H4', 'stroke-width="2.4"'),
  hatch: P('M6 2 H30 V32 H6 Z', 'stroke-width="3"') + P('M6 8 H30 M6 26 H30', 'stroke-width="3"') + P('M10 22 L18 12 M16 22 L24 12 M22 22 L30 12'),
  pen: P('M12 2 V22 L18 34 L24 22 V2 M12 22 H24'),
  penset2: P('M5 2 H31 V32 H5 Z', 'stroke-width="3"') + P('M12 12 H24 V22 H12 Z', 'stroke-width="3"'),
  renov: P('M8 12 H3 V26 H8 M12 12 H26 V32 H12 Z M14 4 Q24 0 22 10 M18 8 L22 12 L26 8') + P('M13 18 H25 V31 H13 Z', solid('#8f9498')),
  model: P('M18 2 L30 26 V34 H6 L8 26 Z', gray) + P('M18 2 L30 24 V34 M21 22 H28 V34 H21 Z'),
  part: P('M4 14 L16 2 V8 L8 16 M8 22 L20 8 V14 L12 22 V34 H30 V18 H20 M16 24 H24 V32 H16 Z'),
  paper: P('M6 4 H32 M6 10 H32', 'stroke-width="2.4"') + P('M12 1 V7 M26 1 V7') + P('M4 14 H32 V34 H4 Z', 'stroke-width="3"'),
  // navigator
  house3d: P('M2 28 V14 L13 3 L38 12 V28 Z M13 3 L20 16 V28 M20 16 H38'),
  projmap: P('M1 2 H39 V28 H1 Z', 'stroke-width="3"') + P('M6 24 V14 L14 5 L34 12 V24 Z M14 5 L20 15 V24 M20 15 H34'),
  viewmap: P('M2 18 L10 2 H18 V16 H38 V28 H2 Z M10 2 V18 M24 22 H38 M26 16 V28'),
  publish: P('M2 4 H26 V20 H2 Z M8 4 V1 M28 8 V24 H6 M32 12 V30 H10', 'stroke-width="2.4"'),
  menu: P('M2 3 H26 M2 10 H26 M2 17 H26'),
  search: `<circle cx="11" cy="11" r="9"/>` + P('M18 18 L25 24'),
  tdown: P('M1 4 L8 9 L15 4', 'stroke="#8f9498" stroke-width="2.5"'),
  tright: P('M4 2 L12 7 L4 12', 'stroke="#8f9498" stroke-width="2.5"'),
  proj: `<rect x="2" y="1" width="35" height="26" ${blue} stroke-width="2.5" fill="${lightB}"/>` + P('M7 23 V14 L14 7 L32 13 V23 Z M14 7 L20 15 V23 M20 15 H32', blue),
  folder: `<path d="M1 3 H17 L24 9 H36 V27 H1 Z" fill="#e8e8e8"/>` + P('M1 8 H24'),
  floor2: `<path d="M2 1 H17 V12 H36 V27 H2 Z" fill="#fff" ${blue}/>` + P('M7 1 V9 L15 1', blue),
  floorlink: `<path d="M4 1 H18 V12 H36 V24 H4 Z" fill="${lightB}" ${blue}/>` + P('M9 1 V9 L17 1', blue) + link,
  elev: `<path d="M2 9 L20 2 L36 9 H34 V26 H4 V9 Z" fill="${lightB}" ${blue}/>` + P('M2 9 H36', blue) + link,
  ielev: `<path d="M2 2 H36 V24 H2 Z" fill="#fff" ${blue}/>` + P('M10 24 V8 H20 V24 M24 6 H32 V14 H24 Z', blue) + link,
  det: `<ellipse cx="19" cy="14" rx="17" ry="13" fill="${lightB}" ${blue}/>` + P('M14 2 V26 M14 10 H36 M14 18 H36', blue) + link,
  sheet: `<path d="M2 2 H26 L36 9 V24 H2 Z" fill="${lightB}" ${blue}/>` + P('M26 2 V9 H36 M12 14 L22 6 M12 18 H30', blue) + link,
  doc3d: `<path d="M2 2 H26 L36 9 V24 H2 Z" fill="${lightB}" ${blue}/>` + P('M26 2 V9 H36 M10 12 L14 8 H26 V18 H10 Z M22 8 V18', blue) + link,
  d3: `<path d="M4 6 L24 1 L33 3 V22 L24 26 L4 24 Z" fill="${lightB}" ${blue}/>` + P('M24 1 V26', blue) + link,
  addview: P('M1 16 H30 V31 H1 Z M6 28 V20 L12 15 L26 20 V28 M18 28 V20') + `<circle cx="32" cy="12" r="10" ${blue} fill="#e8e8e8"/>` + P('M26 12 H38 M32 6 V18', blue),
  addlink: P('M3 16 H34 V31 H9 M10 28 V20 L16 15 L30 20 V28') + link.replace('M1 27', 'M0 34') + `<circle cx="34" cy="12" r="10" ${blue} fill="#e8e8e8"/>` + P('M28 12 H40 M34 6 V18', blue),
  addfolder: P('M1 16 L14 12 L20 18 H32 V31 H1 Z') + `<circle cx="32" cy="12" r="10" ${blue} fill="#e8e8e8"/>` + P('M26 12 H38 M32 6 V18', blue),
  listblue: P('M2 12 H30 V28 H2 Z M7 17 h3 M7 23 h3 M13 17 H26 M13 23 H26', blue),
  redx: P('M3 8 L29 30 M29 8 L3 30', 'stroke="#ff8a80" stroke-width="4"'),
  stack: P('M10 2 H30 L22 9 H2 Z M10 9 H30 L22 16 H2 M10 16 H30 L22 23 H2'),
  scale: P('M1 6 H30 V20 H1 Z') + P('M7 20 V15 M13 20 V13 M19 20 V15 M25 20 V13'),
  penset: P('M1 3 H30 V23 H1 Z', 'stroke-width="2.5"') + P('M7 9 H24 V17 H7 Z'),
  traceon: P('M2 3 H31 V24 H2 Z', 'stroke-width="3"') + P('M7 8 H26', gray) + P('M7 29 H35 V6', `${blue} stroke-width="3"`),
  t1: `<g opacity=".8">` + P('M2 2 H22 V20', gray) + P('M2 2 V20 H10 M8 8 L28 24', gray) + P('M16 14 H36 V32 H16 Z', blue) + `</g>`,
  t2: `<g opacity=".8">` + P('M2 2 H22 V16 M2 2 V24 H14', blue) + P('M12 24 H34 M22 14 V36 M18 18 L22 14 L26 18 M18 32 L22 36 L26 32', gray) + `</g>`,
  t3: `<g opacity=".8">` + P('M2 14 L22 4 L32 18 L14 30 Z', blue) + P('M20 30 Q30 30 32 18 M26 20 L32 16 L36 22', gray) + `</g>`,
  t4: `<g opacity=".8">` + P('M2 2 H26 V24 H2 Z', blue) + P('M10 10 H36 V32 H10 Z', blue) + P('M12 14 Q24 8 30 24 M14 8 L10 14 L18 16', gray) + `</g>`,
  t5: `<g opacity=".8">` + `<ellipse cx="18" cy="18" rx="17" ry="14" ${gray}/>` + P('M8 14 Q16 6 28 14 M24 10 L28 14 L32 10 M28 22 Q20 30 8 22 M12 26 L8 22 L4 26', gray) + `</g>`,
  t6: `<g opacity=".8">` + P('M2 3 H26 V20 H2 Z', blue) + P('M14 34 L8 24 L14 24 V14 M18 14 V26 M22 14 V26 M26 16 V26 M30 18 V26 Q32 34 26 36', gray) + `</g>`,
  t7: `<g opacity=".8">` + P('M2 3 H26 V22 H2 Z', gray) + P('M12 12 H36 V32 H12 Z', blue) + P('M18 22 H24 V28', gray) + `</g>`,
  t8: `<g opacity=".8">` + P('M2 6 H19 V30 H2 Z', gray) + P('M19 6 H36 V30 H19 Z M19 0 V36', blue) + P('M12 12 L6 18 L12 24 M26 12 L32 18 L26 24', gray) + `</g>`,
  t9: `<g opacity=".8">` + P('M2 3 H26 V22 H2 Z M6 18 L20 4 M14 20 L26 8', gray) + `<ellipse cx="24" cy="27" rx="12" ry="6" ${gray}/>` + P('M14 32 L30 20', gray) + `</g>`,
  pie: `<ellipse cx="14" cy="12" rx="12" ry="10" ${gray} fill="#f2f2f2"/>` + P('M14 12 L2 10 Q4 2 14 2 Z', solid('#60b583')) + P('M14 12 V2 Q24 2 26 11 Z', solid('#f08a80')) + P('M14 12 L26 11 Q24 22 14 22 Q4 22 2 11 Z', solid('#7ab3f0')),
  winset: P('M2 2 H28 M2 2 V14', 'stroke-width="3"') + P('M7 8 H33 V25 H7 Z M7 12 H33', 'stroke-width="2.5"')
}

const Ico = (props) => {
  const w = props.w || 36
  const ht = props.h || 36
  return h('svg', {
    width: w,
    height: ht,
    viewBox: `0 0 ${w} ${ht}`,
    fill: 'none',
    stroke: '#25323a',
    'stroke-width': 2,
    overflow: 'visible',
    innerHTML: icons[props.n] || ''
  })
}
Ico.props = ['n', 'w', 'h']

// toolbar cells: centre x in the window, width is worked out from the neighbours
const tools = [
  ['sep', 76], ['home', 118], ['sep', 158], ['save', 197], ['sep', 241], ['undo', 281], ['redo', 342], ['sep', 383],
  ['find', 425], ['pipette', 484], ['inject', 543], ['hammer', 604], ['sep', 645], ['xmark', 686], ['ruler', 746],
  ['tri', 806, 1], ['chev', 851, 1], ['snap', 896, 1], ['chev', 941, 1], ['xy', 986, 1], ['chev', 1031, 1],
  ['gridsnap', 1076], ['chev', 1121], ['plane', 1167], ['chev', 1211], ['gravity', 1256], ['chev', 1300],
  ['weight', 1345], ['chev', 1390], ['layers', 1437], ['chev', 1481], ['diamond', 1527], ['chev', 1571],
  ['frame', 1617], ['chev', 1661], ['sep', 1687], ['star', 1728], ['house', 1788], ['drawing', 1847],
  ['keyback', 1908], ['clouddoc', 1967], ['flaglist', 2029], ['tag', 2088], ['penhatch', 2147], ['chev', 2192],
  ['tricircle', 2237], ['chev', 2283], ['sep', 2309], ['scissors', 2350], ['trim', 2408], ['blueup', 2471],
  ['docarrow', 2529], ['docarrow2', 2590], ['corner', 2651], ['arc', 2710], ['housearrow', 2770], ['sep', 2812],
  ['move', 2856], ['chev', 2899], ['rotate', 2944], ['chev', 2989], ['percent', 3035], ['chev', 3079], ['copy', 3122]
]
const toolCells = tools.map((t, i) => {
  const left = i === 0 ? 67 : (tools[i - 1][1] + t[1]) / 2
  const right = i === tools.length - 1 ? 3160 : (tools[i + 1][1] + t[1]) / 2
  return { n: t[0], on: t[2], width: right - left }
})

const toolGroups = [
  { title: 'Planung', items: [['Wand', 'wall'], ['Tür', 'door'], ['Fenster', 'fenster'], ['Decke', 'slab'], ['Stütze', 'column'], ['Träger', 'beam'], ['Dach', 'roof'], ['Schale', 'shell'], ['Dachfenster', 'skylight'], ['Fassade', 'facade'], ['Treppe', 'stair'], ['Geländer', 'railing'], ['Objekt', 'object'], ['Lichtquelle', 'lamp'], ['Wandabschluss', 'wallend'], ['Morph', 'morph'], ['Freifläche', 'surface'], ['Öffnung', 'opening'], ['Raum', 'zone']] },
  { title: 'Sichten', items: [['Schnitt', 'section'], ['Ansicht', 'elevation'], ['Innenansicht', 'interior'], ['Detail', 'detail'], ['Arbeitsblatt', 'worksheet'], ['Kamera', 'camera']] },
  { title: 'Dokumentation', items: [['Bemaßung', 'dim'], ['Höhenbemaßung', 'leveldim']] }
]

const gridX = [621, 871, 1121, 1371, 1621, 1871, 2121, 2371, 2621, 2871, 3121]
const gridY = [458, 708, 958, 1208, 1458, 1708, 1958]

// closed ring between two offsets from the outer wall face
const ring = (a, b) => {
  const r = (o, cw) => {
    const x0 = 798 + o, x1 = 2752 - o, y0 = 597 + o, y1 = 1780 - o
    return cw ? `M${x0} ${y0} H${x1} V${y1} H${x0} Z` : `M${x0} ${y0} V${y1} H${x1} V${y0} Z`
  }
  return r(a, true) + r(b, false)
}

const windows = [
  { id: 5, t: 'matrix(1 0 0 1 1582 597)', stroke: '#6a5a72', fill: '#c9a4e0' },
  { id: 4, t: 'matrix(1 0 0 1 2153 597)', stroke: '#ff00ff', fill: '#e59ff9' },
  { id: 1, t: 'matrix(1 0 0 -1 1174 1781)', stroke: '#ff00ff', fill: '#e59ff9' },
  { id: 2, t: 'matrix(1 0 0 -1 1777 1781)', stroke: '#000', fill: 'none' },
  { id: 6, t: 'matrix(0 1 1 0 798 898)', stroke: '#000', fill: 'none' },
  { id: 3, t: 'matrix(0 1 -1 0 2752 1218)', stroke: '#000', fill: 'none' }
]
const handles = [[1582, 597], [1897, 597], [1582, 669], [1897, 669], [1582, 687], [1582, 732], [1739, 732], [1897, 732]]
const diamonds = [[1475, 503], [1739, 503], [1879, 696]]

const labels = [
  { id: 'Fenster-005', x: 1475, y: 423, w: 527, gs: 1882, nx: 1653, sel: true },
  { id: 'Fenster-004', x: 2045, y: 423, w: 529, gs: 2454, nx: 2224 },
  { id: 'Fenster-001', x: 1069, y: 1796, w: 524, gs: 1475, nx: 1249 },
  { id: 'Fenster-002', x: 1696, y: 1796, w: 473, nx: 1848 }
]
const sideLabels = [
  { id: 'Fenster-006', x: 625, y: 819 },
  { id: 'Fenster-003', x: 2766, y: 1140 }
]

const statusItems = [
  { key: 1, w: 240, ico: 'zoomfit', t: '402%', mid: true },
  { key: 2, w: 240, ico: 'angle', t: '0,00°', mid: true },
  { key: 3, w: 240, ico: 'scale2', t: '1:100', mid: true },
  { key: 4, w: 239, ico: 'stack2', t: '00 Arbeitsei...' },
  { key: 5, w: 241, ico: 'hatch', t: 'Komplettes...' },
  { key: 6, w: 240, ico: 'pen', t: '04 S/W 1:20/...' },
  { key: 7, w: 240, ico: 'penset2', t: '00 Arbeitsei...' },
  { key: 8, w: 240, ico: 'renov', t: 'GS', mid: true },
  { key: 9, w: 239, ico: 'model', t: '00 Reiner N...' },
  { key: 10, w: 239, ico: 'part', t: 'Nur Hauptm...' },
  { key: 11, w: 230, ico: 'paper', t: 'DIN 1356 -...' }
]

const treeRows = [
  { l: 0, c: 'd', i: 'proj', t: 'Ohne Titel' },
  { l: 1, c: 'd', i: 'folder', t: 'Beispielausschnitte' },
  { l: 2, c: 'd', i: 'folder', t: 'Arbeitseinstellung' },
  { l: 3, c: 'd', i: 'floorlink', t: 'Geschosse' },
  { l: 4, i: 'floor2', t: '1. OG' },
  { l: 4, i: 'floor2', t: '0. EG', sel: true },
  { l: 4, i: 'floor2', t: '-1. UG' },
  { l: 3, i: 'elev', t: 'Ansichten' },
  { l: 3, i: 'elev', t: 'Schnitte' },
  { l: 3, i: 'ielev', t: 'Innenansichten' },
  { l: 3, i: 'det', t: 'Details' },
  { l: 3, i: 'sheet', t: 'Arbeitsblätter' },
  { l: 3, i: 'doc3d', t: '3D-Dokumente' },
  { l: 3, c: 'r', i: 'd3', t: '3D' },
  { l: 2, c: 'r', i: 'folder', t: 'Vorentwurfsplanung' },
  { l: 2, c: 'r', i: 'folder', t: 'Entwurfsplanung' },
  { l: 2, c: 'r', i: 'folder', t: 'Genehmigungsplan' }
]
</script>

<style scoped>
.page {
  position: relative;
  width: 3592px;
  height: 2200px;
  padding: 51px 0 0 67px;
  box-sizing: border-box;
  background: #fff;
  font-family: Inter, "Noto Sans", "Liberation Sans", sans-serif;
  color: #1d1d1f;
  overflow: hidden;
}
.window {
  width: 3458px;
  height: 2065px;
  border-radius: 26px;
  overflow: hidden;
  background: #e8e8e8;
  display: flex;
  flex-direction: column;
  box-shadow: 0 0 3px rgba(0, 0, 0, .35), 0 24px 70px rgba(0, 0, 0, .26);
}
.grow { flex: 1; }

/* title */
.titlebar {
  height: 56px;
  flex: none;
  display: grid;
  grid-template-columns: 1fr auto 1fr;
  align-items: center;
  background: #e4e4e2;
  border-bottom: 2px solid #c9c9c9;
}
.traffic { display: flex; gap: 16px; padding-left: 17px; }
.traffic i {
  width: 23px;
  height: 23px;
  border-radius: 50%;
  background: #cfcfcd;
  border: 1px solid #bcbcba;
  box-sizing: border-box;
}
.title {
  display: flex;
  align-items: center;
  gap: 10px;
  font: 600 26px "Liberation Sans", sans-serif;
  color: #a4a4a4;
}

/* toolbar */
.toolbar { height: 72px; flex: none; background: #e4e4e2; }
.tb-strip { width: 3093px; height: 72px; background: #e8e8e8; display: flex; }
.tb-cell { height: 72px; display: flex; align-items: center; justify-content: center; flex: none; }
.tb-sep { width: 2px; height: 44px; background: #cdcdcd; flex: none; }
.tb-icon { width: 56px; height: 57px; display: flex; align-items: center; justify-content: center; flex: none; border-radius: 12px; }
.tb-chev { width: 26px; height: 57px; display: flex; align-items: center; justify-content: center; flex: none; border-radius: 10px; }
.on { background: #b2b2b6; box-shadow: 0 1px 1px rgba(0, 0, 0, .2); }

/* info box */
.infobar {
  height: 125px;
  flex: none;
  display: flex;
  background: #e8e8e8;
  border-top: 2px solid #e0e0e0;
  border-bottom: 3px solid #e0e0e0;
  box-sizing: border-box;
  font-size: 22px;
}
.sec {
  flex: none;
  box-sizing: border-box;
  border-left: 2px solid #d3d3d3;
  display: flex;
  flex-direction: column;
}
.sec:first-child { border-left: 0; }
.sec-label {
  height: 34px;
  line-height: 34px;
  padding-left: 9px;
  font-size: 18.5px;
  color: #333;
  white-space: nowrap;
}
.lab-main { padding-left: 19px; }
.lab-class { padding-left: 2px; }
.sec-body {
  flex: 1;
  display: flex;
  align-items: center;
  padding: 0 0 3px 9px;
  min-height: 0;
}
.btn {
  background: #fff;
  border-radius: 10px;
  box-shadow: 0 1px 2px rgba(0, 0, 0, .28);
  display: inline-flex;
  align-items: center;
  justify-content: center;
  flex: none;
}
.active { background: #b2b2b6; }
.haupt { display: flex; align-items: flex-end; padding: 0 0 14px 19px; flex: 1; }
.alle { font-size: 18.5px; line-height: 18px; margin-bottom: 7px; color: #333; }
.haupt-btns { display: flex; gap: 4px; margin-left: 2px; }
.hb { width: 80px; height: 37px; gap: 3px; overflow: hidden; }
.winbtn { width: 75px; height: 57px; margin-left: 5px; }
.tinybtn { width: 17px; height: 57px; margin-left: 4px; }
.bold { font-weight: 700; font-size: 22.5px; color: #1f2a30; }
.chevbtn { width: 26px; height: 57px; margin-right: 11px; }
.anchors { padding-left: 12px; gap: 3px; }
.anchor { width: 84px; height: 57px; border-radius: 10px; display: flex; align-items: center; justify-content: center; }
.size { gap: 9px; padding-left: 11px; }
.two { display: flex; flex-direction: column; gap: 9px; }
.two.tight { gap: 5px; }
.inrow { display: flex; align-items: center; gap: 11px; height: 33px; }
.input {
  display: block;
  box-sizing: border-box;
  height: 33px;
  line-height: 32px;
  background: #fff;
  padding-left: 8px;
  box-shadow: 0 1px 1px rgba(0, 0, 0, .35);
  font-size: 21px;
}
.w222 { width: 222px; }
.w260 { width: 260px; margin-left: 5px; }
.smallbtn { width: 27px; height: 27px; border-radius: 9px; }
.parapet { padding-left: 17px; gap: 6px; }
.txtrow { display: flex; align-items: center; justify-content: space-between; height: 33px; width: 265px; font-size: 22px; color: #333; white-space: nowrap; }
.mirror { padding-left: 19px; gap: 5px; }
.mirrorbtn { width: 258px; height: 57px; font-size: 22px; }
.idbody { padding-left: 6px; gap: 4px; }
.idfield {
  box-sizing: border-box;
  width: 272px;
  height: 52px;
  border: 7px solid #76a6ea;
  border-radius: 6px;
  background: #fff;
  padding-left: 4px;
  line-height: 36px;
  font-size: 22px;
  white-space: pre;
}
.idfield mark { background: #b3d4fc; color: inherit; }
.idbtn { width: 76px; height: 57px; gap: 7px; }
.classbody { padding-left: 13px; gap: 10px; font-size: 22px; }
.treebtn { width: 77px; height: 57px; margin-right: 11px; gap: 2px; }
.markbody { padding-left: 27px; gap: 6px; overflow: hidden; }
.markbtn { width: 40px; height: 57px; justify-content: flex-start; padding-left: 8px; box-sizing: border-box; font-size: 22px; }

.main { flex: 1; display: flex; min-height: 0; }

/* left palette */
.lpanel {
  width: 315px;
  flex: none;
  display: flex;
  flex-direction: column;
  background: #eeeeee;
  border-right: 4px solid #e0e0e0;
  box-sizing: border-box;
}
.l-list { position: relative; height: 1761px; overflow: hidden; font-size: 22px; color: #1f2a30; }
.handle { width: 118px; height: 2px; background: #a6a6a6; margin: 8px 0 4px 98px; }
.l-row {
  height: 56px;
  display: flex;
  align-items: center;
  gap: 17px;
  padding-left: 20px;
  white-space: nowrap;
}
.l-ico { width: 56px; height: 36px; display: block; flex: none; }
.l-ico svg { display: block; }
.pfeil { height: 52px; margin: 0 0 2px 3px; padding-left: 17px; background: #b2b2b6; border-radius: 12px; }
.l-head {
  height: 39px;
  margin: 3px 0 1px 0;
  padding-left: 12px;
  display: flex;
  align-items: center;
  background: #cfcfcf;
  border-radius: 8px;
  font-size: 22px;
  color: #333;
}
.tri {
  width: 0;
  height: 0;
  border-left: 9px solid transparent;
  border-right: 9px solid transparent;
  border-top: 10px solid #8a8a8a;
  margin-right: 16px;
  flex: none;
}
.l-scroll { position: absolute; right: 0; top: 1658px; width: 18px; height: 81px; background: #f8f8f8; }
.l-scroll i { display: block; width: 12px; height: 28px; margin: 7px 0 0 3px; border-radius: 5px; background: #7c7c7c; }
.l-foot { flex: 1; background: #e8e8e8; border-top: 1px solid #ddd; }

/* centre */
.center { width: 2771px; flex: none; display: flex; flex-direction: column; }
.tabbar { height: 43px; flex: none; display: flex; background: #dedede; }
.tab-grid { width: 66px; background: #e8e8e8; display: flex; align-items: center; justify-content: center; flex: none; }
.tab {
  width: 599px;
  flex: none;
  background: #fff;
  display: flex;
  align-items: center;
  justify-content: center;
  gap: 6px;
  font-size: 22px;
  color: #3a3f44;
  box-sizing: border-box;
}
.tab-right { width: 93px; background: #f4f4f4; display: flex; align-items: center; gap: 6px; padding-left: 18px; box-sizing: border-box; flex: none; }
.canvas { position: relative; height: 1682px; flex: none; background: #fff; overflow: hidden; }
.drawing { display: block; }
.lbl text { font-family: "Liberation Sans", Arial, sans-serif; font-size: 68.5px; }
.lbl.side text { font-size: 67px; stroke: #000; stroke-width: .8; }
.edge {
  position: absolute;
  background: #f2f2f2;
}
.edge::after {
  content: "";
  position: absolute;
  left: 8px;
  right: 8px;
  top: 50%;
  height: 3px;
  margin-top: -1px;
  background: repeating-linear-gradient(90deg, #ff9d4d 0 9px, transparent 9px 13px);
}
.e-top { left: 1353px; top: 2px; width: 64px; height: 28px; }
.e-bottom { left: 1353px; top: 1652px; width: 64px; height: 28px; }
.e-left, .e-right { top: 804px; width: 28px; height: 64px; }
.e-left { left: 8px; }
.e-right { left: 2741px; }
.e-left::after, .e-right::after {
  left: 50%;
  right: auto;
  top: 8px;
  bottom: 8px;
  width: 3px;
  height: auto;
  margin: 0 0 0 -1px;
  background: repeating-linear-gradient(0deg, #ff9d4d 0 9px, transparent 9px 13px);
}
.statusbar { height: 36px; flex: none; display: flex; background: #e8e8e8; font-size: 21px; color: #333; }
.st-zoom { width: 143px; flex: none; display: flex; align-items: center; gap: 10px; padding-left: 2px; box-sizing: border-box; }
.st-sec { flex: none; display: flex; align-items: center; box-sizing: border-box; border-left: 2px solid #d3d3d3; position: relative; }
.st-ico { width: 62px; flex: none; display: flex; justify-content: center; padding-right: 8px; box-sizing: border-box; }
.st-txt { flex: 1; white-space: nowrap; }
.st-txt.mid { text-align: center; padding-right: 2px; }
.st-chev { width: 38px; flex: none; display: flex; justify-content: center; padding-right: 4px; box-sizing: border-box; }
.c-foot { flex: 1; background: #e8e8e8; border-top: 2px solid #e0e0e0; }

/* right palette */
.rpanel {
  width: 372px;
  flex: none;
  box-sizing: border-box;
  background: #e8e8e8;
  border-left: 3px solid #dcdcdc;
  display: flex;
  flex-direction: column;
  font-size: 22px;
  color: #1f2a30;
}
.handle.wide { width: 140px; margin: 7px 0 0 114px; flex: none; }
.handle.second { margin-top: 16px; }
.r-tabs { height: 56px; margin-top: 8px; display: flex; align-items: center; padding-left: 14px; flex: none; }
.vline { width: 2px; height: 30px; background: #cdcdcd; margin: 0 11px 0 22px; }
.r-on { width: 56px; height: 56px; background: #b2b2b6; border-radius: 10px; display: flex; align-items: center; justify-content: center; margin-right: 11px; }
.pub { margin-left: 23px; }
.r-menu { width: 66px; height: 44px; gap: 8px; margin-left: 40px; border-radius: 12px; }
.r-search {
  height: 40px;
  margin: 15px 5px 0 6px;
  background: #fff;
  box-shadow: 0 1px 1px rgba(0, 0, 0, .25);
  display: flex;
  align-items: center;
  gap: 16px;
  padding-left: 14px;
  color: #c0c0c0;
  flex: none;
  white-space: nowrap;
}
.r-tree-wrap { height: 802px; margin-top: 8px; display: flex; flex: none; overflow: hidden; }
.r-tree { width: 338px; background: #fff; flex: none; overflow: hidden; }
.t-row { height: 48px; display: flex; align-items: center; white-space: nowrap; }
.t-row.sel { background: #d6d6d6; font-weight: 700; }
.t-chev { width: 16px; height: 14px; margin-right: 13px; flex: none; display: block; }
.t-chev svg { display: block; }
.t-text { margin-left: 8px; }
.r-vbar { flex: 1; background: #f8f8f8; padding: 5px 0 0 8px; }
.r-vbar i { display: block; width: 16px; height: 525px; border-radius: 8px; background: #bdbdbd; }
.r-hbar { height: 27px; flex: none; background: #f8f8f8; padding: 9px 0 0 6px; box-sizing: border-box; }
.r-hbar i { display: block; width: 251px; height: 15px; border-radius: 8px; background: #bdbdbd; }
.r-actions { height: 70px; flex: none; display: flex; align-items: center; gap: 16px; padding-left: 10px; }
.r-actions svg:nth-child(3) { margin-left: 6px; }
.r-actions svg:nth-child(4) { margin-left: 5px; }
.r-actions svg:nth-child(5) { margin-left: 11px; }
.r-head { height: 44px; margin: 1px 3px 0 4px; padding-left: 11px; flex: none; }
.r-head .tri { margin-right: 16px; }
.r-fields { height: 33px; margin-top: 8px; display: flex; align-items: center; flex: none; padding-left: 7px; }
.r-in { height: 33px; line-height: 33px; background: #fff; padding-left: 8px; box-sizing: border-box; box-shadow: 0 1px 1px rgba(0, 0, 0, .2); }
.r-in.a { width: 60px; margin: 0 10px 0 10px; }
.r-in.b { width: 246px; }
.r-line { height: 42px; display: flex; align-items: center; gap: 8px; padding-left: 6px; flex: none; white-space: nowrap; }
.r-line.first { margin-top: 2px; }
.r-settings { height: 40px; margin: 3px 3px 0 4px; border-radius: 12px; flex: none; }
.r-trace { height: 56px; margin-top: 10px; display: flex; gap: 4px; padding-left: 6px; flex: none; }
.r-square { width: 56px; height: 56px; border-radius: 12px; flex: none; gap: 6px; }
.r-square.dim, .r-mini.dim {
  display: flex;
  align-items: center;
  justify-content: center;
  background: #f2f2f2;
  box-shadow: 0 1px 2px rgba(0, 0, 0, .15);
  box-sizing: border-box;
}
.r-disabled {
  width: 296px;
  height: 56px;
  background: #f2f2f2;
  border-radius: 12px;
  box-shadow: 0 1px 2px rgba(0, 0, 0, .15);
  display: flex;
  align-items: center;
  gap: 10px;
  padding: 0 14px 0 7px;
  box-sizing: border-box;
  color: #bbb;
}
.r-dim { height: 60px; margin-top: 6px; display: flex; align-items: center; padding: 0 18px 0 18px; gap: 22px; flex: none; }
.r-sep { height: 2px; background: #d6d6d6; margin-top: 13px; flex: none; }
.r-cap { height: 26px; line-height: 26px; margin-top: 14px; padding-left: 6px; color: #8c8c8c; flex: none; }
.r-cap.cap2 { margin-top: 11px; }
.r-slider { height: 56px; margin-top: 12px; display: flex; align-items: center; padding-left: 6px; flex: none; }
.swatch { width: 24px; height: 23px; background: #ff8a80; display: block; }
.track {
  position: relative;
  width: 261px;
  height: 8px;
  margin: 0 5px 0 8px;
  background: #e0e0e0;
  display: flex;
  justify-content: space-between;
  flex: none;
}
.track i { width: 4px; height: 12px; margin-top: -2px; background: #d6d6d6; display: block; }
.track b {
  position: absolute;
  right: 1px;
  top: -11px;
  width: 16px;
  height: 30px;
  background: #f2f2f2;
  border-radius: 7px;
  box-shadow: 0 1px 2px rgba(0, 0, 0, .2);
}
.r-mini { width: 26px; height: 56px; border-radius: 10px; flex: none; }
.r-sep.s2 { margin-top: 14px; }
.center-row { justify-content: center; gap: 22px; margin-top: 10px; }
.r-foot {
  flex: 1;
  display: flex;
  align-items: center;
  border-top: 2px solid #dedede;
  margin-top: 2px;
  padding: 0 0 6px 74px;
}
.vbar { width: 2px; height: 26px; background: #777; margin: 0 20px 0 18px; }
.gs-id { font: 400 25px "Liberation Sans", sans-serif; color: #25323a; white-space: nowrap; }
.gs-id b { font-weight: 400; -webkit-text-stroke: .6px #25323a; }

.marks { position: absolute; left: 0; top: 0; pointer-events: none; }
</style>
